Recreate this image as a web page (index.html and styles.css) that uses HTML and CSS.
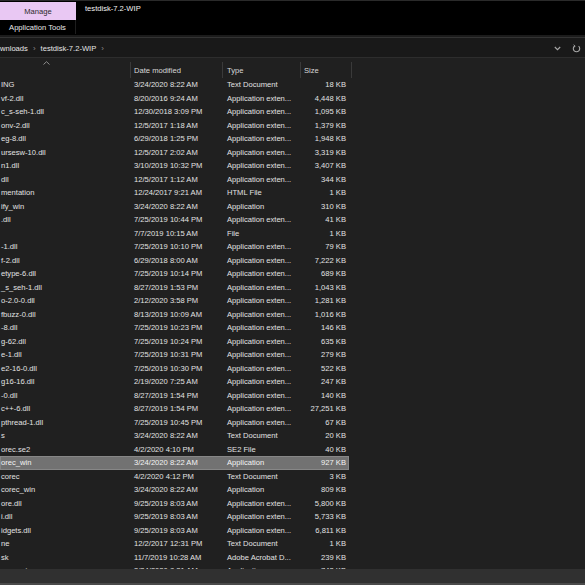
FILE: index.html
```html
<!DOCTYPE html>
<html>
<head>
<meta charset="utf-8">
<link rel="stylesheet" href="styles.css">
</head>
<body>
<div class="ribbon">
  <div class="tabs">
    <div class="manage">Manage</div>
    <div class="title">testdisk-7.2-WIP</div>
  </div>
  <div class="subtabs">
    <div class="apptools">Application Tools</div>
  </div>
</div>
<div class="band"></div>
<div class="addr">
  <span class="crumb">wnloads</span>
  <span class="sep">›</span>
  <span class="crumb">testdisk-7.2-WIP</span>
  <span class="sep">›</span>
  <span class="addr-icons">
    <svg class="chev" width="7" height="5" viewBox="0 0 7 5"><path d="M0.8 1 L3.5 3.7 L6.2 1" fill="none" stroke="#a8a8a8" stroke-width="1.1"/></svg>
    <svg class="refresh" width="9" height="9" viewBox="0 0 9 9"><path d="M6.6 2.2 A3.2 3.2 0 1 1 2.4 2.2" fill="none" stroke="#a8a8a8" stroke-width="1.1"/><path d="M1.6 0.8 L3.2 2.3 L1.4 3.4" fill="none" stroke="#a8a8a8" stroke-width="1"/></svg>
  </span>
</div>
<div class="list">
  <div class="header">
    <div class="hcell hname"><svg class="caret" width="7" height="4" viewBox="0 0 7 4"><path d="M0.5 3.5 L3.5 0.7 L6.5 3.5" fill="none" stroke="#9a9a9a" stroke-width="0.9"/></svg></div>
    <div class="hcell hdate">Date modified</div>
    <div class="hcell htype">Type</div>
    <div class="hcell hsize">Size</div>
  </div>
  <div class="rows">
    <div class="row"><span class="name">ING</span><span class="date">3/24/2020 8:22 AM</span><span class="type">Text Document</span><span class="size">18 KB</span></div>
    <div class="row"><span class="name">vf-2.dll</span><span class="date">8/20/2016 9:24 AM</span><span class="type">Application exten...</span><span class="size">4,448 KB</span></div>
    <div class="row"><span class="name">c_s-seh-1.dll</span><span class="date">12/30/2018 3:09 PM</span><span class="type">Application exten...</span><span class="size">1,095 KB</span></div>
    <div class="row"><span class="name">onv-2.dll</span><span class="date">12/5/2017 1:18 AM</span><span class="type">Application exten...</span><span class="size">1,379 KB</span></div>
    <div class="row"><span class="name">eg-8.dll</span><span class="date">6/29/2018 1:25 PM</span><span class="type">Application exten...</span><span class="size">1,948 KB</span></div>
    <div class="row"><span class="name">ursesw-10.dll</span><span class="date">12/5/2017 2:02 AM</span><span class="type">Application exten...</span><span class="size">3,319 KB</span></div>
    <div class="row"><span class="name">n1.dll</span><span class="date">3/10/2019 10:32 PM</span><span class="type">Application exten...</span><span class="size">3,407 KB</span></div>
    <div class="row"><span class="name">dll</span><span class="date">12/5/2017 1:12 AM</span><span class="type">Application exten...</span><span class="size">344 KB</span></div>
    <div class="row"><span class="name">mentation</span><span class="date">12/24/2017 9:21 AM</span><span class="type">HTML File</span><span class="size">1 KB</span></div>
    <div class="row"><span class="name">ify_win</span><span class="date">3/24/2020 8:22 AM</span><span class="type">Application</span><span class="size">310 KB</span></div>
    <div class="row"><span class="name">.dll</span><span class="date">7/25/2019 10:44 PM</span><span class="type">Application exten...</span><span class="size">41 KB</span></div>
    <div class="row"><span class="name"></span><span class="date">7/7/2019 10:15 AM</span><span class="type">File</span><span class="size">1 KB</span></div>
    <div class="row"><span class="name">-1.dll</span><span class="date">7/25/2019 10:10 PM</span><span class="type">Application exten...</span><span class="size">79 KB</span></div>
    <div class="row"><span class="name">f-2.dll</span><span class="date">6/29/2018 8:00 AM</span><span class="type">Application exten...</span><span class="size">7,222 KB</span></div>
    <div class="row"><span class="name">etype-6.dll</span><span class="date">7/25/2019 10:14 PM</span><span class="type">Application exten...</span><span class="size">689 KB</span></div>
    <div class="row"><span class="name">_s_seh-1.dll</span><span class="date">8/27/2019 1:53 PM</span><span class="type">Application exten...</span><span class="size">1,043 KB</span></div>
    <div class="row"><span class="name">o-2.0-0.dll</span><span class="date">2/12/2020 3:58 PM</span><span class="type">Application exten...</span><span class="size">1,281 KB</span></div>
    <div class="row"><span class="name">fbuzz-0.dll</span><span class="date">8/13/2019 10:09 AM</span><span class="type">Application exten...</span><span class="size">1,016 KB</span></div>
    <div class="row"><span class="name">-8.dll</span><span class="date">7/25/2019 10:23 PM</span><span class="type">Application exten...</span><span class="size">146 KB</span></div>
    <div class="row"><span class="name">g-62.dll</span><span class="date">7/25/2019 10:24 PM</span><span class="type">Application exten...</span><span class="size">635 KB</span></div>
    <div class="row"><span class="name">e-1.dll</span><span class="date">7/25/2019 10:31 PM</span><span class="type">Application exten...</span><span class="size">279 KB</span></div>
    <div class="row"><span class="name">e2-16-0.dll</span><span class="date">7/25/2019 10:30 PM</span><span class="type">Application exten...</span><span class="size">522 KB</span></div>
    <div class="row"><span class="name">g16-16.dll</span><span class="date">2/19/2020 7:25 AM</span><span class="type">Application exten...</span><span class="size">247 KB</span></div>
    <div class="row"><span class="name">-0.dll</span><span class="date">8/27/2019 1:54 PM</span><span class="type">Application exten...</span><span class="size">140 KB</span></div>
    <div class="row"><span class="name">c++-6.dll</span><span class="date">8/27/2019 1:54 PM</span><span class="type">Application exten...</span><span class="size">27,251 KB</span></div>
    <div class="row"><span class="name">pthread-1.dll</span><span class="date">7/25/2019 10:45 PM</span><span class="type">Application exten...</span><span class="size">67 KB</span></div>
    <div class="row"><span class="name">s</span><span class="date">3/24/2020 8:22 AM</span><span class="type">Text Document</span><span class="size">20 KB</span></div>
    <div class="row"><span class="name">orec.se2</span><span class="date">4/2/2020 4:10 PM</span><span class="type">SE2 File</span><span class="size">40 KB</span></div>
    <div class="row selected"><span class="name">orec_win</span><span class="date">3/24/2020 8:22 AM</span><span class="type">Application</span><span class="size">927 KB</span></div>
    <div class="row"><span class="name">corec</span><span class="date">4/2/2020 4:12 PM</span><span class="type">Text Document</span><span class="size">3 KB</span></div>
    <div class="row"><span class="name">corec_win</span><span class="date">3/24/2020 8:22 AM</span><span class="type">Application</span><span class="size">809 KB</span></div>
    <div class="row"><span class="name">ore.dll</span><span class="date">9/25/2019 8:03 AM</span><span class="type">Application exten...</span><span class="size">5,800 KB</span></div>
    <div class="row"><span class="name">i.dll</span><span class="date">9/25/2019 8:03 AM</span><span class="type">Application exten...</span><span class="size">5,733 KB</span></div>
    <div class="row"><span class="name">idgets.dll</span><span class="date">9/25/2019 8:03 AM</span><span class="type">Application exten...</span><span class="size">6,811 KB</span></div>
    <div class="row"><span class="name">ne</span><span class="date">12/2/2017 12:31 PM</span><span class="type">Text Document</span><span class="size">1 KB</span></div>
    <div class="row"><span class="name">sk</span><span class="date">11/7/2019 10:28 AM</span><span class="type">Adobe Acrobat D...</span><span class="size">239 KB</span></div>
    <div class="row"><span class="name">orec_win</span><span class="date">3/24/2020 8:21 AM</span><span class="type">Application</span><span class="size">743 KB</span></div>
  </div>
</div>
<div class="status"></div>
</body>
</html>
```

FILE: styles.css
```css
html, body {
  margin: 0;
  padding: 0;
  width: 585px;
  height: 585px;
  overflow: hidden;
  background: #202020;
  font-family: "Liberation Sans", Arial, sans-serif;
  font-size: 7.6px;
  color: #e2e2e2;
}

.ribbon {
  height: 34px;
  background: #000;
  border-top: 1px solid #2a2a2a;
}

.tabs {
  display: flex;
  height: 19px;
  align-items: stretch;
}

.manage {
  width: 76px;
  margin-top: 1px;
  background: #e9c8f3;
  color: #2a2a2a;
  display: flex;
  align-items: center;
  justify-content: center;
}

.title {
  padding-left: 9px;
  padding-top: 3px;
  color: #f2f2f2;
}

.subtabs {
  display: flex;
  height: 14px;
}

.apptools {
  width: 75px;
  border-right: 1px solid #1e1e1e;
  display: flex;
  align-items: center;
  justify-content: center;
  color: #e8e8e8;
  padding-top: 1px;
}

.band {
  height: 2px;
  background: #1b1b1b;
  border-bottom: 1px solid #333;
}

.addr {
  height: 19px;
  background: #191919;
  border-bottom: 1px solid #2d2d2d;
  display: flex;
  align-items: center;
  padding-top: 1px;
  box-sizing: border-box;
  height: 20px;
}

.crumb {
  color: #e6e6e6;
}

.sep {
  color: #8a8a8a;
  font-size: 8px;
  margin: 0 5px;
}

.addr-icons {
  margin-left: auto;
  display: flex;
  align-items: center;
  gap: 11px;
  padding-right: 4px;
}

.list {
  height: 511px;
  overflow: hidden;
  padding-top: 4px;
  box-sizing: border-box;
}

.header {
  display: grid;
  grid-template-columns: 131px 92px 78px 51px;
  width: 352px;
  height: 16px;
}

.hcell {
  border-right: 1px solid #3a3a3a;
  display: flex;
  align-items: center;
  color: #d8d8d8;
}

.hname {
  align-items: flex-start;
  padding-left: 43px;
}

.caret {
  margin-top: -1px;
}

.hdate { padding-left: 3px; }
.htype { padding-left: 4px; }
.hsize { padding-left: 3px; }

.rows {
  display: flex;
  flex-direction: column;
}

.row {
  display: grid;
  grid-template-columns: 131px 92px 78px 48px;
  width: 349px;
  height: 13.5px;
  align-items: center;
  white-space: nowrap;
  box-sizing: border-box;
}

.row.selected {
  background: #727272;
  box-shadow: inset 0 0 0 1px #878787;
  color: #f4f4f4;
}

.name {
  padding-left: 1px;
  overflow: hidden;
}

.date { padding-left: 3px; }
.type { padding-left: 4px; overflow: hidden; }
.size { text-align: right; padding-right: 3px; }

.status {
  height: 14px;
  background: #303030;
  border-bottom: 2px solid #4a4a4a;
}
```
